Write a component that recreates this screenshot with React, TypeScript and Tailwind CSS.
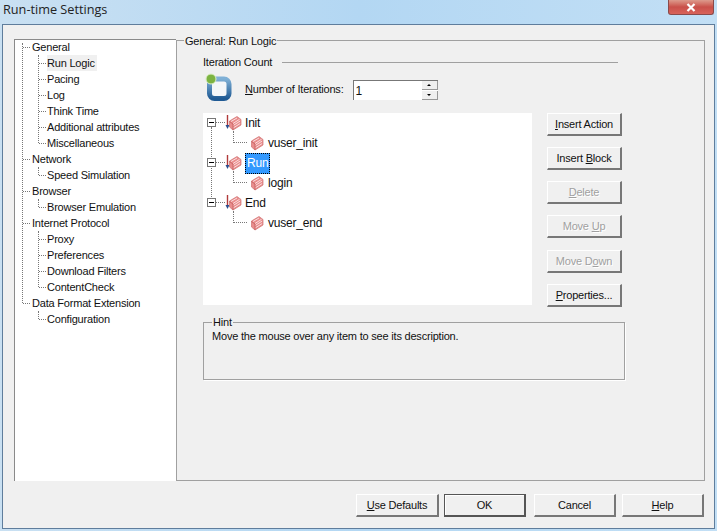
import type { ReactNode } from 'react';

const font = { fontFamily: '"Liberation Sans", Arial, sans-serif' };

const sideTree = [
  { name: 'General', kids: ['Run Logic', 'Pacing', 'Log', 'Think Time', 'Additional attributes', 'Miscellaneous'] },
  { name: 'Network', kids: ['Speed Simulation'] },
  { name: 'Browser', kids: ['Browser Emulation'] },
  { name: 'Internet Protocol', kids: ['Proxy', 'Preferences', 'Download Filters', 'ContentCheck'] },
  { name: 'Data Format Extension', kids: ['Configuration'] },
];

const logicTree = [
  { name: 'Init', kid: 'vuser_init' },
  { name: 'Run', kid: 'login', selected: true },
  { name: 'End', kid: 'vuser_end' },
];

const Brick = ({ arrow }: { arrow?: boolean }) => (
  <svg width="17" height="16" viewBox="0 0 17 16" className="shrink-0">
    {arrow && (
      <>
        <path d="M2.5 0v11" stroke="#b03a3a" strokeWidth="1.4" />
        <path d="M0.5 10h4L2.5 14z" fill="#2a4f8f" />
      </>
    )}
    <path d="M4.5 6L12 1.5l4 3v5.5L8 15l-3.5-3z" fill="#e98d8d" stroke="#cf7070" strokeWidth="0.7" />
    <path d="M6 6.5l6-3.5M8 8.5l6.5-4.2M8.2 10.5l7-4.5M8.2 13l7-4.5" stroke="#fbdede" strokeWidth="1" fill="none" />
    <path d="M4.5 6.5L8 9v6" stroke="#c25a5a" strokeWidth="0.8" fill="none" />
  </svg>
);

const LoopIcon = () => (
  <svg width="27" height="28" viewBox="0 0 27 28" className="shrink-0">
    <defs>
      <linearGradient id="loop" x1="0" y1="0" x2="0" y2="1">
        <stop offset="0" stopColor="#7fb0d6" />
        <stop offset="1" stopColor="#1f5a94" />
      </linearGradient>
    </defs>
    <rect x="4.5" y="6" width="19.5" height="19.5" rx="5" fill="#f3f6f9" stroke="url(#loop)" strokeWidth="5" />
    <circle cx="6" cy="6" r="5" fill="#7cb342" stroke="#dcefc5" strokeWidth="1" />
  </svg>
);

const Btn = ({ children, disabled, className = 'w-[75px]' }: { children: ReactNode; disabled?: boolean; className?: string }) => (
  <button
    className={`h-[23px] shrink-0 border-t border-l border-t-white border-l-white border-r-2 border-b-2 border-r-[#777] border-b-[#777] bg-[#f0f0f0] text-[11px] leading-none tracking-[-0.2px] ${className} ${
      disabled ? 'text-[#a0a0a0] [text-shadow:1px_1px_0_#fff]' : 'text-[#111]'
    }`}
  >
    {children}
  </button>
);

const SideTree = () => (
  <div className="relative -mt-px">
    <span className="absolute left-[7px] top-[4px] bottom-[24px] border-l border-dotted border-[#777]" />
    {sideTree.map((g) => (
      <div key={g.name}>
        <div className="relative flex h-4 items-center pl-[17px]">
          <span className="absolute left-[8px] top-[8px] w-[7px] border-t border-dotted border-[#777]" />
          {g.name}
        </div>
        <div className="relative">
          <span className="absolute left-[23px] top-0 bottom-[8px] border-l border-dotted border-[#777]" />
          {g.kids.map((k) => (
            <div key={k} className="relative flex h-4 items-center pl-[32px]">
              <span className="absolute left-[24px] top-[8px] w-[7px] border-t border-dotted border-[#777]" />
              <span className={k === 'Run Logic' ? 'bg-[#f0f0f0] pr-[2px]' : ''}>{k}</span>
            </div>
          ))}
        </div>
      </div>
    ))}
  </div>
);

const LogicTree = () => (
  <div className="relative h-[192px] w-[329px] shrink-0 bg-white text-[12px] text-[#111]">
    <span className="absolute left-[8px] top-[14px] h-[76px] border-l border-dotted border-[#777]" />
    {logicTree.map((n) => (
      <div key={n.name}>
        <div className="relative flex h-5 items-center pl-[22px]">
          <span className="absolute left-[13px] top-[9px] w-[9px] border-t border-dotted border-[#777]" />
          <span className="absolute left-[4px] top-[5px] flex h-[9px] w-[9px] items-center justify-center border border-[#777] bg-white">
            <span className="h-px w-[5px] bg-black" />
          </span>
          <Brick arrow />
          <span
            className={`px-[1px] py-[2px] leading-[15px] ${
              n.selected ? 'ml-[3px] border border-dotted border-black bg-[#3399ff] text-white' : 'ml-[1px] border border-transparent'
            }`}
          >
            {n.name}
          </span>
        </div>
        <div className="relative flex h-5 items-center pl-[44px]">
          <span className="absolute left-[30px] top-[-2px] h-[12px] w-[14px] border-l border-b border-dotted border-[#777]" />
          <Brick />
          <span className="ml-[4px]">{n.kid}</span>
        </div>
      </div>
    ))}
  </div>
);

export default function App() {
  return (
    <div style={font} className="flex h-[531px] w-[717px] flex-col overflow-hidden bg-gradient-to-r from-[#c9e0f2] via-[#b3d7f3] to-[#c2dff5] text-[11px] tracking-[-0.2px] text-[#111]">
      <div className="flex h-6 shrink-0 items-start justify-between pl-[3px] pr-[3px]">
        <span className="pt-[1px] text-[12.7px] leading-[17px] tracking-normal text-[#222]" style={{ fontFamily: '"Open Sans", sans-serif' }}>
          Run-time Settings
        </span>
        <div className="flex h-[15px] w-[46px] items-center justify-center rounded-b-[3px] border border-t-0 border-[#8a4a4a] bg-gradient-to-b from-[#dc9a8c] via-[#c9504a] to-[#d8635a]">
          <svg width="10" height="9" viewBox="0 0 10 9">
            <path d="M1.5 1l7 7M8.5 1l-7 7" stroke="#fff" strokeWidth="2.2" />
          </svg>
        </div>
      </div>

      <div className="mx-[2px] mb-[2px] flex min-h-0 flex-1 flex-col border border-[#5f7d9c] bg-[#f0f0f0]">
        <div className="flex h-[456px] shrink-0 pl-[11px] pt-[14px]">
          <div className="h-full w-[162px] shrink-0 border-l border-t border-[#8a8a8a] bg-white">
            <SideTree />
          </div>

          <div className="relative mt-[1px] flex w-[529px] shrink-0 flex-col border border-[#a0a0a0] pl-[26px] pt-[13px]">
            <span className="absolute left-[7px] top-[-7px] bg-[#f0f0f0] px-[1px] leading-[15px]">General: Run Logic</span>

            <div className="flex h-4 w-[415px] items-center gap-[10px]">
              <span>Iteration Count</span>
              <span className="h-px flex-1 bg-[#a0a0a0]" />
            </div>

            <div className="mt-[3px] flex h-[27px] items-start pl-[2px]">
              <LoopIcon />
              <span className="ml-[13px] mt-[9px] leading-[15px]">
                <u>N</u>umber of Iterations:
              </span>
              <div className="ml-[9px] mt-[7px] flex h-[20px] w-[85px] items-center justify-between border-t border-l border-[#777] bg-white pl-[2px] text-[12px]">
                <span>1</span>
                <div className="flex h-full w-[16px] flex-col gap-px bg-white">
                  <span className="flex h-[9px] items-center justify-center border-r border-b border-[#999] bg-[#f0f0f0]">
                    <span className="h-0 w-0 border-x-[2px] border-b-[2px] border-x-transparent border-b-black" />
                  </span>
                  <span className="flex h-[9px] items-center justify-center border-r border-b border-[#999] bg-[#f0f0f0]">
                    <span className="h-0 w-0 border-x-[2px] border-t-[2px] border-x-transparent border-t-black" />
                  </span>
                </div>
              </div>
            </div>

            <div className="mt-[13px] flex gap-[15px]">
              <LogicTree />
              <div className="flex flex-col gap-[11px]">
                <Btn><u>I</u>nsert Action</Btn>
                <Btn>Insert <u>B</u>lock</Btn>
                <Btn disabled><u>D</u>elete</Btn>
                <Btn disabled>Move <u>U</u>p</Btn>
                <Btn disabled className="mt-[1px] w-[75px]">Move D<u>o</u>wn</Btn>
                <Btn><u>P</u>roperties...</Btn>
              </div>
            </div>

            <div className="relative mt-[15px] h-[58px] w-[422px] border border-[#a0a0a0] pl-[8px] pt-[6px] shadow-[1px_1px_0_#fff]">
              <span className="absolute left-[8px] top-[-8px] bg-[#f0f0f0] px-[1px] leading-[15px]">Hint</span>
              <p className="leading-[15px]">Move the mouse over any item to see its description.</p>
            </div>
          </div>
        </div>

        <div className="flex justify-end pr-[10px] pt-[13px]">
          <Btn className="w-[83px]"><u>U</u>se Defaults</Btn>
          <button className="ml-[5px] h-[23px] w-[82px] border border-b-2 border-r-2 border-[#555] bg-[#f0f0f0] text-[11px] leading-none tracking-[-0.2px] shadow-[inset_1px_1px_0_#fff]">OK</button>
          <Btn className="ml-[8px] w-[82px]">Cancel</Btn>
          <Btn className="ml-[6px] w-[82px]"><u>H</u>elp</Btn>
        </div>
      </div>
    </div>
  );
}
